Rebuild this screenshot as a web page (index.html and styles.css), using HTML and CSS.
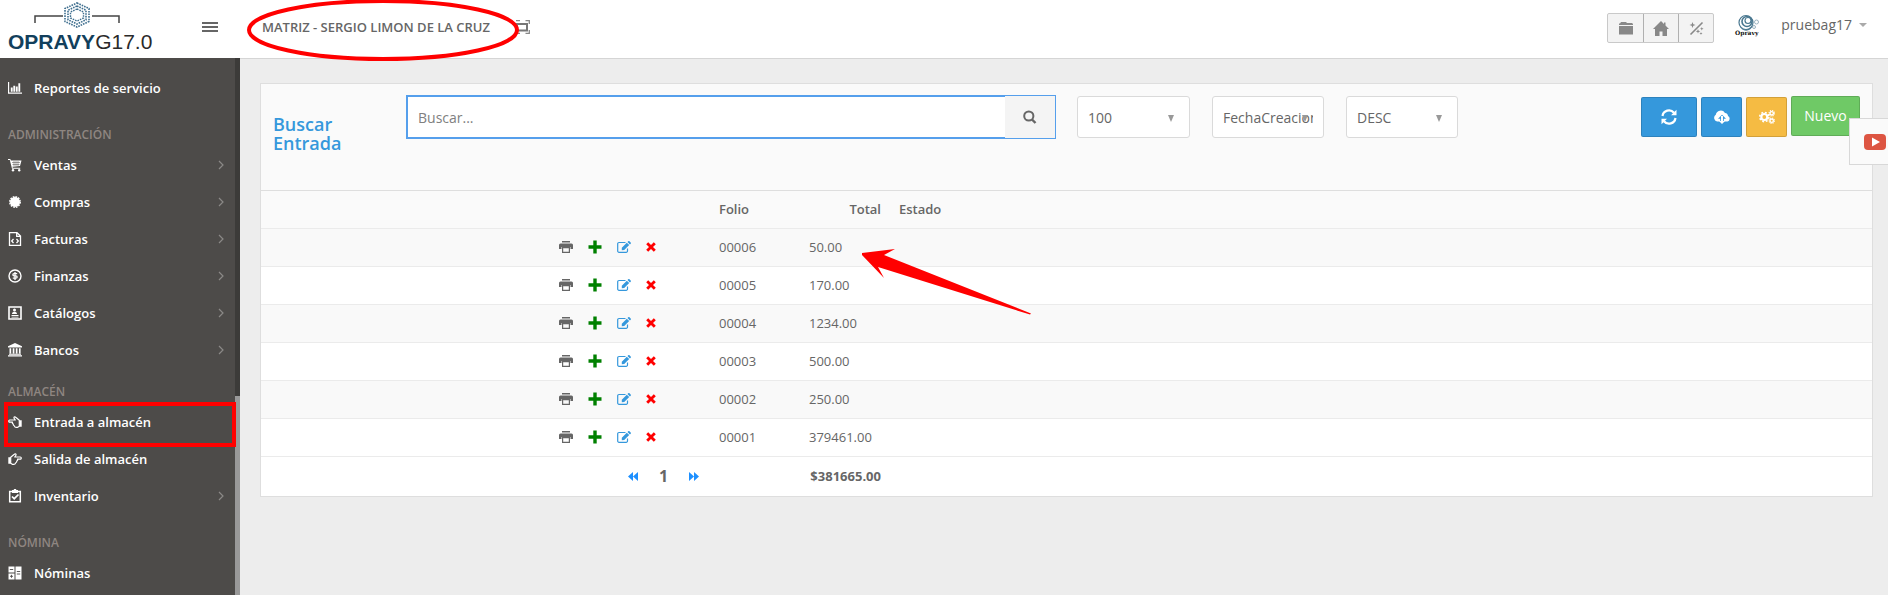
FILE: index.html
```html
<!DOCTYPE html>
<html lang="es">
<head>
<meta charset="utf-8">
<title>Entrada a almacén</title>
<link rel="stylesheet" href="styles.css">
</head>
<body>
<svg class="sprite" aria-hidden="true">
  <symbol id="chev" viewBox="0 0 6 10"><path d="M1 1l4 4-4 4" fill="none" stroke="currentColor" stroke-width="1.2"/></symbol>
  <symbol id="print" viewBox="0 0 14 12"><path d="M3 0h8v1.500H3zM1.500 2.500h11A1.500 1.500 0 0 1 14 4V8H11.500V6h-9v2H0V4A1.500 1.500 0 0 1 1.500 2.500z"/><path d="M3 6h8V12H3zM4.200 7.200v3.500h5.600V7.200z" fill-rule="evenodd"/></symbol>
  <symbol id="plus" viewBox="0 0 14 14"><path d="M5.300.5h3.400v4.800H13.500v3.400H8.700v4.800H5.300V8.700H.5V5.300h4.800z"/></symbol>
  <symbol id="edit" viewBox="0 0 14 12"><path d="M8.500 1.500H2A1.300 1.300 0 0 0 .7 2.800v7.200A1.300 1.300 0 0 0 2 11.300h7.200a1.300 1.300 0 0 0 1.300-1.300V7.500" fill="none" stroke="currentColor" stroke-width="1.200"/><path d="M4.800 9.200V6.700l5-5 2.400 2.400-5 5zM10.500 1l1-1 .7 0L13.900 1.700v.7l-1 1z"/></symbol>
  <symbol id="cross" viewBox="0 0 10 10"><path d="M2.200.2L5 3 7.800.2l2 2L7 5l2.800 2.800-2 2L5 7 2.200 9.800l-2-2L3 5 .2 2.200z"/></symbol>
  <symbol id="hand" viewBox="0 0 14 12"><path d="M5.200 4H1.700C.4 4 .4 6.200 1.700 6.200h2.800c-.5.800 0 1.600.8 1.800-.2.900.3 1.600 1 1.800.1 1 .7 1.500 1.700 1.500h1.700l1.600-1V4.300L8.300 1.700 6.800.8C5.900.7 5.700 1.800 6.200 2.500L7.300 4z" fill="none" stroke="currentColor" stroke-width="1.200" stroke-linejoin="round"/><path d="M11.300 4.200h2.400v6.500h-2.400z"/></symbol>
</svg>

<div class="app">
<header class="topbar">
  <a class="brand" href="#" aria-label="OPRAVYG17.0">
    <svg class="brand-mark" viewBox="0 0 88 26" aria-hidden="true">
      <path d="M1 21v-7h28M58 14h27v7" fill="none" stroke="#444" stroke-width="1.500"/>
      <g fill="none" stroke="#3f6f8f" stroke-dasharray="1.600 1"><path d="M43 1l12 5.500v13L43 25l-12-5.500v-13z" stroke-width="1.600"/><path d="M43 4l9 4.200v9.600L43 22l-9-4.200V8.200z" stroke-width="1.600"/><path d="M43 7l6.500 3v6L43 19l-6.500-3v-6z" stroke-width="1.400"/></g>
    </svg>
    <span class="brand-text"><b>OPRAVY</b><span>G17.0</span></span>
  </a>
  <button class="burger" type="button" aria-label="Menú"><i></i><i></i><i></i></button>
  <div class="branch">
    <span>MATRIZ - SERGIO LIMON DE LA CRUZ</span>
    <svg class="ring" viewBox="0 0 272 62" aria-hidden="true"><ellipse cx="136" cy="30" rx="134" ry="29" fill="none" stroke="#f00" stroke-width="4"/></svg>
  </div>
  <button class="fit" type="button" aria-label="Pantalla completa"><svg width="14" height="14" viewBox="0 0 14 14"><path d="M1 4h10v6.500H1z" fill="none" stroke="#777" stroke-width="2"/><path d="M0 .7h4M9.500 .7h3.800V4M9.500 13.300h3.800V10M0 13.300h4" fill="none" stroke="#888" stroke-width="1.300"/></svg></button>
  <div class="tools">
    <button type="button" aria-label="Carpeta"><svg width="16" height="14" viewBox="0 0 16 14"><path d="M1 4V2.500h1L3 1h5l1 1h5l1 1v1zM1 5h14v8.500H1z"/></svg></button>
    <button type="button" aria-label="Inicio"><svg width="16" height="15" viewBox="0 0 16 15"><path d="M8 0l3 3V1.500h1.500v3L16 8h-2v7H9.500v-4.500h-3V15H2V8H0z"/></svg></button>
    <button type="button" aria-label="Herramientas"><svg width="15" height="15" viewBox="0 0 15 15"><path d="M13.500 1.500L1.500 13.500" stroke="#888" stroke-width="1.600"/><path d="M3.500 1l.8 2.200 2.200.8-2.200.8L3.500 7l-.8-2.200L.5 4l2.200-.8zM9 8l.6 1.700 1.700.6-1.700.6L9 12.600l-.6-1.700-1.700-.6 1.700-.6zM12.800 6l.5 1.300 1.300.5-1.300.5-.5 1.300-.5-1.300-1.300-.5 1.300-.5zM12 11l.4 1.100 1.100.4-1.100.4L12 14l-.4-1.100-1.100-.4 1.100-.4z"/></svg></button>
  </div>
  <button class="user" type="button">
    <svg width="26" height="22" viewBox="0 0 26 22" aria-hidden="true"><g fill="none" stroke="#4a7890"><circle cx="11" cy="7.500" r="7" stroke-width="1.200"/><circle cx="12" cy="6.500" r="5" stroke-width="1.600"/><circle cx="13" cy="5.500" r="3" stroke-width="1.200"/><circle cx="21.500" cy="7" r="2" stroke="#9bb3c0"/><circle cx="19" cy="12" r="1.500" stroke="#9bb3c0"/></g><path d="M4 10c3 6 10 6 14 0-2 7-11 8-14 0z" fill="#4a7890"/><text x="0" y="20" class="avatar-text">Opravy</text></svg>
    <span>pruebag17</span><i class="caret"></i>
  </button>
</header>

<div class="body">
<nav class="side">
  <ul>
    <li><a href="#"><svg viewBox="0 0 15 13"><path d="M.6 0v12h14.400" fill="none" stroke="currentColor" stroke-width="1.300"/><path d="M3 6h2v4.500H3zM5.700 4h2v6.500h-2zM8.400 5h2v5.500h-2zM11.100 1.500h2v9h-2z"/></svg>Reportes de servicio</a></li>
  </ul>
  <h3>ADMINISTRACIÓN</h3>
  <ul>
    <li><a href="#"><svg viewBox="0 0 14 13"><path d="M0 .5h2.300l.5 1.500H13.500L12 7.500 4.500 8.200l.3 1H12.200v1H4L1.800 1.600H0z"/><circle cx="5" cy="11.700" r="1.200"/><circle cx="11.200" cy="11.700" r="1.200"/><path d="M4 4h8M4.500 6h7M6 2.500v5M8 2.500v5M10 2.500v5" stroke="#4d4b49" stroke-width=".5"/></svg>Ventas<svg class="chev"><use href="#chev"/></svg></a></li>
    <li><a href="#"><svg viewBox="0 0 14 14"><circle cx="7" cy="7" r="5"/><circle cx="7" cy="7" r="5.200" fill="none" stroke="currentColor" stroke-width="1.500" stroke-dasharray="1.700 1"/></svg>Compras<svg class="chev"><use href="#chev"/></svg></a></li>
    <li><a href="#"><svg viewBox="0 0 14 14"><path d="M1.500.7H9L12.500 4v9.300h-11zM8.700.7v3.600h3.800M5.500 7L3.700 9l1.800 2M8.500 7l1.800 2-1.800 2" fill="none" stroke="currentColor" stroke-width="1.300"/></svg>Facturas<svg class="chev"><use href="#chev"/></svg></a></li>
    <li><a href="#"><svg viewBox="0 0 14 14"><circle cx="7" cy="7" r="6" fill="none" stroke="currentColor" stroke-width="1.400"/><path d="M9.200 4.700H6c-1.500 0-1.500 2.200 0 2.200h2c1.500 0 1.500 2.300 0 2.300H4.800M7 3v8" fill="none" stroke="currentColor" stroke-width="1.300"/></svg>Finanzas<svg class="chev"><use href="#chev"/></svg></a></li>
    <li><a href="#"><svg viewBox="0 0 14 14"><path d="M1 1h12v12H1z" fill="none" stroke="currentColor" stroke-width="1.600"/><circle cx="6.500" cy="4" r="1.500"/><path d="M4 8c0-3 5-3 5 0zM3.500 9h7v.9h-7zM3.500 10.700h7v.9h-7z"/></svg>Catálogos<svg class="chev"><use href="#chev"/></svg></a></li>
    <li><a href="#"><svg viewBox="0 0 14 14"><path d="M7 0l7 3.200V4.500H0V3.200zM1.500 5.200h1.700v5.300H1.500zM4.700 5.200h1.700v5.300H4.700zM7.800 5.200h1.700v5.300H7.800zM10.900 5.200h1.700v5.300h-1.700zM1 10.700h12v1H1zM0 12.200h14V13.500H0z"/></svg>Bancos<svg class="chev"><use href="#chev"/></svg></a></li>
  </ul>
  <h3 class="tight">ALMACÉN</h3>
  <ul>
    <li class="marked"><a href="#"><svg viewBox="0 0 14 12"><use href="#hand"/></svg>Entrada a almacén</a></li>
    <li><a href="#"><svg class="flip" viewBox="0 0 14 12"><use href="#hand"/></svg>Salida de almacén</a></li>
    <li><a href="#"><svg viewBox="0 0 14 14"><path d="M1.700 2.500h10.600v10.300H1.700z" fill="none" stroke="currentColor" stroke-width="1.500"/><path d="M4 1h1.700a1.300 1.300 0 0 1 2.600 0H10v3H4z"/><path d="M4 7.500l2.200 2.200L10.500 5.500" fill="none" stroke="currentColor" stroke-width="1.700"/></svg>Inventario<svg class="chev"><use href="#chev"/></svg></a></li>
  </ul>
  <h3>NÓMINA</h3>
  <ul>
    <li><a href="#"><svg viewBox="0 0 14 14"><path d="M.5.500h6v6h-6zM7.500.500h6v13h-6zM.5 7.500h6v6h-6z"/><path d="M1.800 3.500h3.400M8.800 5.500h3.400M8.800 8h3.400M3.500 8.800v3M2 10.300h3" stroke="#4d4b49" stroke-width=".9"/></svg>Nóminas</a></li>
  </ul>
  <div class="scroll"><i></i></div>
</nav>

<main class="content">
  <section class="card">
    <div class="filters">
      <h1>Buscar Entrada</h1>
      <form class="search">
        <input type="text" placeholder="Buscar..." aria-label="Buscar">
        <button type="button" aria-label="Buscar"><svg width="14" height="14" viewBox="0 0 14 14"><circle cx="5.800" cy="6" r="4.600" fill="none" stroke="#666" stroke-width="2"/><path d="M9 9.500l3.500 3.500" stroke="#666" stroke-width="2.400"/></svg></button>
      </form>
      <div class="selects">
        <label class="sel"><select aria-label="Registros"><option>100</option></select></label>
        <label class="sel"><select aria-label="Ordenar por"><option>FechaCreacion</option></select></label>
        <label class="sel"><select aria-label="Dirección"><option>DESC</option></select></label>
      </div>
      <div class="actions">
        <button class="blue wide" type="button" aria-label="Actualizar"><svg width="16" height="16" viewBox="0 0 16 16"><path d="M1.500 7A6.500 6.500 0 0 1 13 3.800M14.500 9A6.500 6.500 0 0 1 3 12.200" fill="none" stroke="#fff" stroke-width="2.200"/><path d="M15.500.8V6.300H10zM.5 15.200V9.700H6z"/></svg></button>
        <button class="blue" type="button" aria-label="Subir"><svg width="18" height="14" viewBox="0 0 18 14"><path d="M4 11.500A3.700 3.700 0 0 1 2.800 4.800 5 5 0 0 1 12 2.900a3.300 3.300 0 0 1 3 3.200 2.900 2.900 0 0 1-.5 5.400h-3.700V8.700H13L9 4.700l-4 4h2.200v2.800z"/><path d="M8 6h2v5h2l-3 3-3-3h2z"/></svg></button>
        <button class="amber" type="button" aria-label="Configurar"><svg width="16" height="14" viewBox="0 0 16 14"><g fill="none" stroke="#fff"><circle cx="5.300" cy="7" r="3" stroke-width="2.200"/><circle cx="5.300" cy="7" r="4.600" stroke-width="1.600" stroke-dasharray="1.900 1.713"/><circle cx="12.700" cy="3.300" r="1.700" stroke-width="1.400"/><circle cx="12.700" cy="3.300" r="2.700" stroke-width="1.100" stroke-dasharray="1.200 .92"/><circle cx="12.700" cy="10.700" r="1.700" stroke-width="1.400"/><circle cx="12.700" cy="10.700" r="2.700" stroke-width="1.100" stroke-dasharray="1.200 .92"/></g></svg></button>
        <button class="green" type="button">Nuevo</button>
      </div>
    </div>
    <table>
      <colgroup><col class="c-pad"><col class="c-act"><col class="c-folio"><col class="c-total"><col></colgroup>
      <thead><tr><th></th><th></th><th>Folio</th><th class="num">Total</th><th class="state">Estado</th></tr></thead>
      <tbody>
        <tr><td></td><td><div class="ops"><a href="#" aria-label="Imprimir"><svg class="i-print"><use href="#print"/></svg></a><a href="#" aria-label="Agregar"><svg class="i-plus"><use href="#plus"/></svg></a><a href="#" aria-label="Editar"><svg class="i-edit"><use href="#edit"/></svg></a><a href="#" aria-label="Eliminar"><svg class="i-cross"><use href="#cross"/></svg></a></div></td><td>00006</td><td>50.00</td><td></td></tr>
        <tr><td></td><td><div class="ops"><a href="#" aria-label="Imprimir"><svg class="i-print"><use href="#print"/></svg></a><a href="#" aria-label="Agregar"><svg class="i-plus"><use href="#plus"/></svg></a><a href="#" aria-label="Editar"><svg class="i-edit"><use href="#edit"/></svg></a><a href="#" aria-label="Eliminar"><svg class="i-cross"><use href="#cross"/></svg></a></div></td><td>00005</td><td>170.00</td><td></td></tr>
        <tr><td></td><td><div class="ops"><a href="#" aria-label="Imprimir"><svg class="i-print"><use href="#print"/></svg></a><a href="#" aria-label="Agregar"><svg class="i-plus"><use href="#plus"/></svg></a><a href="#" aria-label="Editar"><svg class="i-edit"><use href="#edit"/></svg></a><a href="#" aria-label="Eliminar"><svg class="i-cross"><use href="#cross"/></svg></a></div></td><td>00004</td><td>1234.00</td><td></td></tr>
        <tr><td></td><td><div class="ops"><a href="#" aria-label="Imprimir"><svg class="i-print"><use href="#print"/></svg></a><a href="#" aria-label="Agregar"><svg class="i-plus"><use href="#plus"/></svg></a><a href="#" aria-label="Editar"><svg class="i-edit"><use href="#edit"/></svg></a><a href="#" aria-label="Eliminar"><svg class="i-cross"><use href="#cross"/></svg></a></div></td><td>00003</td><td>500.00</td><td></td></tr>
        <tr><td></td><td><div class="ops"><a href="#" aria-label="Imprimir"><svg class="i-print"><use href="#print"/></svg></a><a href="#" aria-label="Agregar"><svg class="i-plus"><use href="#plus"/></svg></a><a href="#" aria-label="Editar"><svg class="i-edit"><use href="#edit"/></svg></a><a href="#" aria-label="Eliminar"><svg class="i-cross"><use href="#cross"/></svg></a></div></td><td>00002</td><td>250.00</td><td></td></tr>
        <tr><td></td><td><div class="ops"><a href="#" aria-label="Imprimir"><svg class="i-print"><use href="#print"/></svg></a><a href="#" aria-label="Agregar"><svg class="i-plus"><use href="#plus"/></svg></a><a href="#" aria-label="Editar"><svg class="i-edit"><use href="#edit"/></svg></a><a href="#" aria-label="Eliminar"><svg class="i-cross"><use href="#cross"/></svg></a></div></td><td>00001</td><td>379461.00</td><td></td></tr>
      </tbody>
      <tfoot><tr><td></td><td colspan="2"><div class="pager"><a href="#" aria-label="Anterior"><svg width="10" height="9" viewBox="0 0 10 9"><path d="M5 0v9L0 4.500zM10 0v9L5 4.500z"/></svg></a><b>1</b><a href="#" aria-label="Siguiente"><svg width="10" height="9" viewBox="0 0 10 9"><path d="M0 0v9l5-4.500zM5 0v9l5-4.500z"/></svg></a></div></td><td class="num">$381665.00</td><td></td></tr></tfoot>
    </table>
    <svg class="arrow" viewBox="0 0 170 66" aria-hidden="true"><path d="M0 4L33 0 22 6 169 64.500 168 65.500 16 18 22 29 0 6z" fill="#f00"/></svg>
  </section>
</main>
</div>
<a class="video" href="#" aria-label="Video"><svg width="22" height="16" viewBox="0 0 22 16"><rect width="22" height="16" rx="4" fill="#dd5542"/><path d="M8 3.500l8 4.500-8 4.500z" fill="#fff"/></svg></a>
</div>
</body>
</html>
```
FILE: styles.css
```css
* { box-sizing: border-box; }
body { margin: 0; background: #ededed; font: 13px/20px "Open Sans", sans-serif; color: #666; }
ul, h1, h3 { margin: 0; padding: 0; list-style: none; }
a { color: inherit; text-decoration: none; }
button { font: inherit; color: inherit; margin: 0; padding: 0; border: 0; background: none; display: flex; align-items: center; justify-content: center; }
svg { display: block; fill: currentColor; }
.sprite { position: absolute; width: 0; height: 0; }
.app { position: relative; display: flex; flex-direction: column; height: 100vh; overflow: hidden; }

.topbar { display: flex; align-items: flex-start; flex: none; height: 59px; background: #fff; border-bottom: 1px solid #d5d5d5; }
.brand { display: flex; flex-direction: column; width: 202px; padding: 2px 0 0 8px; }
.brand-mark { width: 88px; height: 26px; margin-left: 26px; }
.brand-text { display: flex; align-items: baseline; font: 21px/28px "Liberation Sans Narrow", "Liberation Sans", sans-serif; color: #2a2a2a; }
.brand-text b { color: #123f5c; }
.burger { flex-direction: column; gap: 2px; width: 16px; margin-top: 22px; }
.burger i { width: 16px; height: 2px; background: #666; }
.branch { position: relative; margin: 17px 0 0 44px; font-weight: 600; white-space: nowrap; }
.ring { position: absolute; left: -15px; top: -17px; width: 272px; height: 62px; z-index: 2; }
.fit { margin: 20px 0 0 26px; }
.tools { display: flex; margin: 13px 0 0 auto; border: 1px solid #c9c9c9; border-radius: 2px; background: #f3f3f3; color: #888; }
.tools button { width: 35px; height: 28px; }
.tools button + button { border-left: 1px solid #b0b0b0; }
.user { margin: 15px 25px 0 22px; align-items: flex-start; font-size: 14px; }
.user svg { overflow: visible; }
.user span { margin: 0 7px 0 20px; }
.user { margin-right: 21px; margin-left: 21px; }
.avatar-text { font: bold 6px "DejaVu Serif", serif; fill: #111; }
.caret { margin-top: 8px; border: 4px solid transparent; border-top-color: #aaa; border-bottom: 0; }

.body { display: flex; flex: 1; min-height: 0; }
.side { position: relative; flex: none; width: 240px; margin-top: -1px; padding-top: 11px; overflow: hidden; background: #4d4b49; color: #fff; }
.side a { display: flex; align-items: center; gap: 12px; height: 37px; padding: 0 16px 0 8px; font-weight: 600; }
.side a > svg { width: 14px; height: 14px; }
.side a > .chev { width: 6px; height: 10px; margin-left: auto; color: #8b8987; }
.side .flip { transform: scaleX(-1); }
.side h3 { margin-top: 17px; padding-left: 8px; font-size: 12px; font-weight: 600; line-height: 23px; color: #8f8681; }
.side h3.tight { margin-top: 12px; }
.marked { position: relative; }
.marked::after { content: ""; position: absolute; inset: -1px 4px -7px 4px; border: 4px solid #f00; z-index: 3; }
.scroll { position: absolute; top: 0; right: 0; bottom: 0; width: 5px; background: #3c3b39; }
.scroll i { position: absolute; top: 63%; bottom: 0; width: 5px; background: #999; }

.content { flex: 1; min-width: 0; padding: 24px 15px 0 20px; }
.card { position: relative; background: #fff; border: 1px solid #dedede; }
.filters { display: flex; align-items: flex-start; min-height: 107px; padding: 11px 12px 0 12px; background: #fafafa; border-bottom: 1px solid #dedede; }
.filters h1 { flex: none; width: 133px; padding: 20px 45px 0 0; font-size: 18px; line-height: 19px; font-weight: 600; color: #3598dc; }
.search { display: flex; flex: 0 1 650px; height: 44px; border: 1px solid #559fec; }
.search input { flex: 1; min-width: 0; padding: 0 10px; border: 1px solid #559fec; border-right: 0; background: #fff; font: 14px "Open Sans", sans-serif; color: #666; outline: 0; }
.search input::placeholder { color: #808080; opacity: 1; }
.search button { width: 50px; background: #f4f4f4; }
.selects { display: flex; gap: 22px; margin: 1px 0 0 21px; }
.sel { position: relative; width: 112px; }
.sel:first-child { width: 113px; }
.sel select { width: 100%; height: 42px; padding: 0 10px; border: 1px solid #dadada; border-radius: 3px; background: #fff; font: 14px "Open Sans", sans-serif; color: #666; appearance: none; }
.sel::after { content: ""; position: absolute; right: 16px; top: 19px; border: 3px solid transparent; border-top: 7px solid #999; border-bottom: 0; pointer-events: none; }
.actions { display: flex; gap: 4px; margin: 2px 0 0 auto; }
.actions button { width: 41px; height: 40px; border: 1px solid rgba(0, 0, 0, .14); border-radius: 2px; color: #fff; }
.actions .wide { width: 56px; }
.actions .blue { background-color: #3598dc; }
.actions .amber { background-color: #f5bb43; }
.actions .green { width: 69px; margin-top: -1px; background-color: #6fc966; font-size: 14px; }

table { width: 100%; border-collapse: collapse; table-layout: fixed; }
.c-pad { width: 18%; }
.c-act { width: 160px; }
.c-folio { width: 90px; }
.c-total { width: 88px; }
th, td { height: 38px; padding: 0 8px; border-bottom: 1px solid #ebebeb; text-align: left; font-weight: 400; }
th { height: 37px; background: #fafafa; font-weight: 600; }
.num { text-align: right; }
th.state { padding-left: 10px; }
tbody tr:nth-child(odd) { background: #f9f9f9; }
.ops { display: flex; align-items: center; gap: 15px; }
.i-print { width: 14px; height: 12px; }
.i-plus { width: 14px; height: 14px; color: #008000; }
.i-edit { width: 14px; height: 12px; color: #3598dc; }
.i-cross { width: 10px; height: 10px; color: #f00; }
tfoot td { height: 40px; border: 0; }
tfoot .num { font-weight: 700; }
.pager { display: flex; align-items: center; gap: 21px; padding-left: 69px; color: #1e90ff; }
.pager b { font-size: 16px; color: #666; }
.arrow { position: absolute; left: 601px; top: 165px; width: 170px; height: 66px; }
.video { position: absolute; right: -2px; top: 118px; display: flex; align-items: center; width: 41px; height: 47px; padding-left: 14px; border: 1px solid #d8d8d8; background: #fafafa; }
```
